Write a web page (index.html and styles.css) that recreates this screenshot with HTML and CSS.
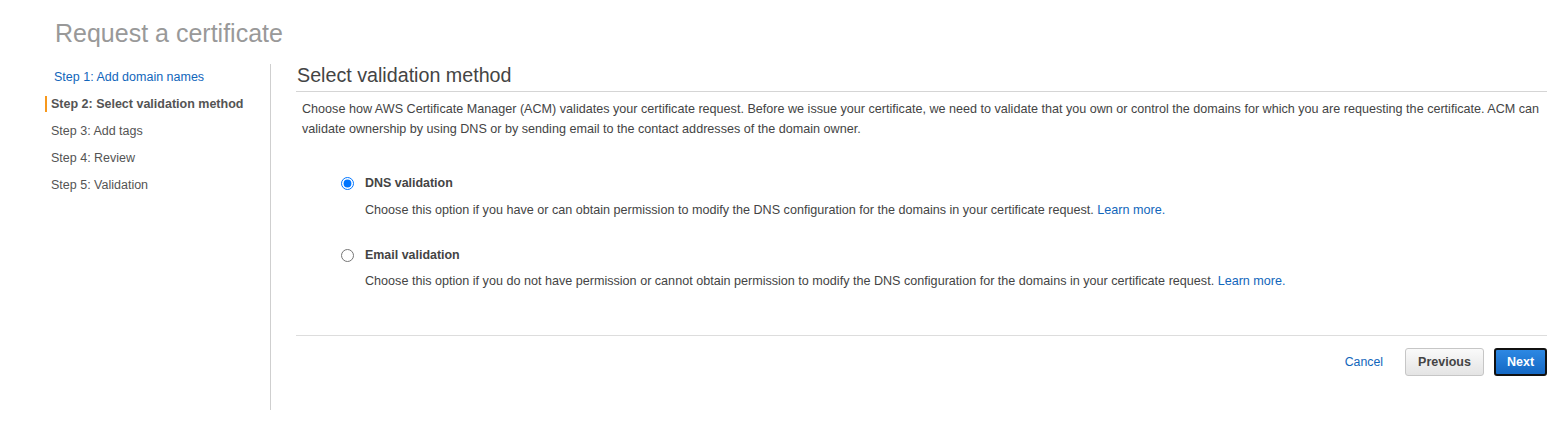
FILE: index.html
```html
<!DOCTYPE html>
<html lang="en">
<head>
<meta charset="utf-8">
<title>Request a certificate</title>
<link rel="stylesheet" href="styles.css">
</head>
<body>
<div class="page">
  <h1 class="page-title">Request a certificate</h1>
  <div class="layout">
    <nav class="steps">
      <ul>
        <li class="step step-link"><a href="#">Step 1: Add domain names</a></li>
        <li class="step step-active"><span>Step 2: Select validation method</span></li>
        <li class="step">Step 3: Add tags</li>
        <li class="step">Step 4: Review</li>
        <li class="step">Step 5: Validation</li>
      </ul>
    </nav>
    <main class="content">
      <h2 class="section-title">Select validation method</h2>
      <p class="intro">Choose how AWS Certificate Manager (ACM) validates your certificate request. Before we issue your certificate, we need to validate that you own or control the domains for which you are requesting the certificate. ACM can validate ownership by using DNS or by sending email to the contact addresses of the domain owner.</p>
      <div class="options">
        <div class="option">
          <label class="option-label"><input type="radio" name="method" checked><span>DNS validation</span></label>
          <p class="option-desc">Choose this option if you have or can obtain permission to modify the DNS configuration for the domains in your certificate request. <a href="#">Learn more.</a></p>
        </div>
        <div class="option">
          <label class="option-label"><input type="radio" name="method"><span>Email validation</span></label>
          <p class="option-desc">Choose this option if you do not have permission or cannot obtain permission to modify the DNS configuration for the domains in your certificate request. <a href="#">Learn more.</a></p>
        </div>
      </div>
      <div class="actions">
        <a href="#" class="cancel">Cancel</a>
        <button class="btn btn-secondary" type="button">Previous</button>
        <button class="btn btn-primary" type="button">Next</button>
      </div>
    </main>
  </div>
</div>
</body>
</html>
```
FILE: styles.css
```css
html, body {
  margin: 0;
  padding: 0;
  background: #fff;
  font-family: "Liberation Sans", Arial, sans-serif;
  color: #444;
}

.page {
  padding: 0 9px 0 45px;
}

.page-title {
  margin: 0;
  padding: 19px 0 0 10px;
  height: 64px;
  box-sizing: border-box;
  font-size: 25px;
  line-height: 28px;
  font-weight: normal;
  color: #999;
}

.layout {
  display: flex;
}

.steps {
  width: 225px;
  flex: none;
  border-right: 1px solid #cfcfcf;
  min-height: 346px;
}

.steps ul {
  list-style: none;
  margin: 0;
  padding: 0;
}

.step {
  font-size: 12.5px;
  line-height: 16px;
  padding: 5px 0 6px 6px;
  color: #545454;
}

.step-link {
  padding-left: 9px;
}

.step-link a {
  color: #1166bb;
  text-decoration: none;
}

.step-active {
  padding-left: 0;
  font-weight: bold;
}

.step-active span {
  display: inline-block;
  border-left: 2px solid #f7981c;
  padding-left: 4px;
}

.content {
  flex: 1;
  padding-left: 25px;
}

.section-title {
  margin: 0;
  font-size: 19.7px;
  line-height: 22px;
  font-weight: normal;
  color: #444;
  padding: 0 0 5px 1px;
  border-bottom: 1px solid #d5d5d5;
}

.intro {
  margin: 7px 0 0;
  padding: 0 6px;
  font-size: 12.6px;
  line-height: 20px;
  color: #444;
}

.options {
  padding: 34px 0 44px 45px;
  border-bottom: 1px solid #dddddd;
}

.option + .option {
  margin-top: 25px;
}

.option-label {
  display: flex;
  align-items: center;
  font-size: 12.45px;
  line-height: 20px;
  font-weight: bold;
  color: #444;
}

.option-label input {
  margin: 0 11px 0 0;
  width: 13px;
  height: 13px;
}

.option-desc {
  margin: 7px 0 0 24px;
  font-size: 12.6px;
  line-height: 20px;
  color: #444;
}

.option + .option .option-desc {
  margin-top: 6px;
}

.option-desc a,
.cancel {
  color: #1166bb;
  text-decoration: none;
}

.actions {
  display: flex;
  justify-content: flex-end;
  align-items: center;
  padding: 12px 0 33px;
}

.cancel {
  font-size: 12.3px;
  margin-right: 22px;
}

.btn {
  font-family: "Liberation Sans", Arial, sans-serif;
  font-size: 12.5px;
  font-weight: bold;
  height: 28px;
  border-radius: 3px;
  cursor: pointer;
}

.btn-secondary {
  width: 79px;
  color: #444;
  border: 1px solid #c6c6c6;
  background: linear-gradient(#fafafa, #e4e4e4);
  margin-right: 10px;
}

.btn-primary {
  width: 53px;
  color: #fff;
  border: 2px solid #111;
  background: linear-gradient(#2d88e3, #1468c4);
}
```
